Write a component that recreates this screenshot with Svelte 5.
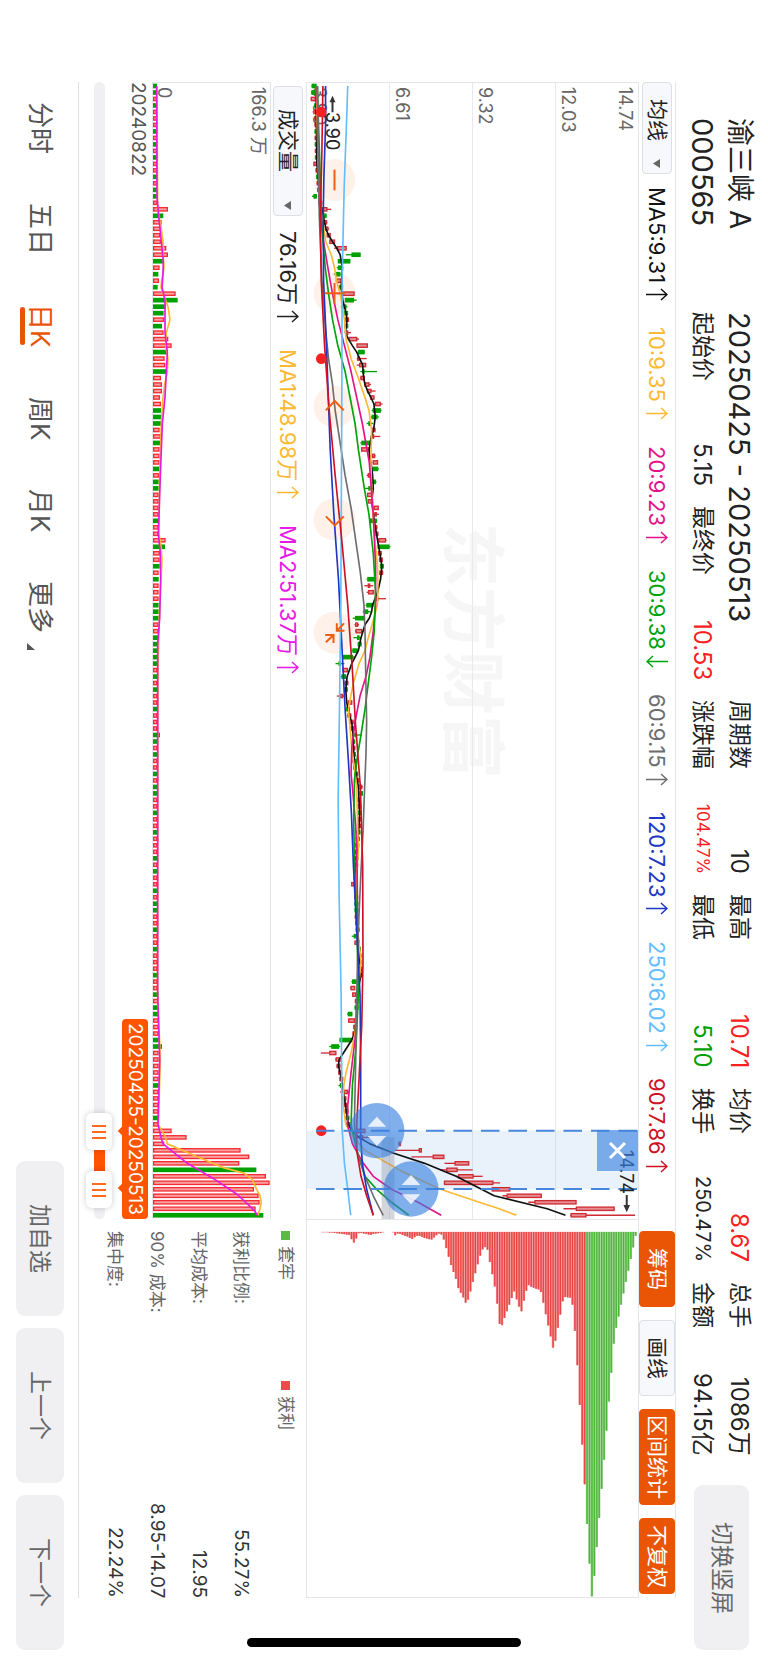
<script>
    // trading days run along the inline axis, one slot per bar
    const SLOT = 19.47;
    const FIRST = 9;
    const LENGTH = 3408;
    const at = (i) => FIRST + i * SLOT;

    const days =
        "GGRGRRRGRGRGRRGRGGR" +
        "RGRRRRRRGRGRGRGGGRGRRRGRRGRRRR" +
        "RGGGRRGRRRGRGGRRRRGRRRGRRGRGRRRGGGRRGGGGGRGRGRRGRRRGG" +
        "RGRRGRGGRRGRRGRRRGRGRRGRGGRRGRRGRRRGRRG" +
        "RGGRRRGGRRRRRGRRRRGR" +
        "RRRRRRGRRRRRRG";

    const busy = {
        19: 45, 20: 31, 21: 26, 22: 26, 23: 22, 24: 24, 25: 40, 26: 45, 27: 30,
        28: 20, 29: 16, 30: 18, 31: 14, 32: 68, 33: 74, 34: 38, 35: 32, 36: 33,
        37: 27, 38: 32, 39: 46, 40: 56, 41: 42, 42: 35, 43: 37, 44: 40, 45: 24,
        46: 27, 47: 27, 48: 21, 49: 24, 50: 24, 51: 24, 52: 24, 53: 20, 54: 24,
        55: 22, 56: 20, 57: 20, 58: 20, 59: 20, 60: 18, 70: 38, 71: 36, 72: 21,
        73: 20, 74: 20, 100: 21, 148: 27, 161: 56, 162: 101, 163: 34, 164: 263,
        165: 289, 166: 259, 167: 310, 168: 339, 169: 350, 170: 303, 171: 317,
        172: 320, 173: 308, 174: 331
    };
    const volumes = [...days].map((d, i) => ({
        up: d === "R",
        y: at(i),
        size: busy[i] ?? (i < 19 ? 12 : i < 86 ? 17 : i < 140 ? 13 : 17)
    }));

    // [bar, value] pairs
    const averages = [
        { name: "MA5", value: "9.31", arrow: "↑", color: "#111111", line: [[0,42],[12,45],[18,55],[20,64],[22,72],[23,80],[24,92],[25,105],[26,115],[28,122],[31,118],[33,123],[35,133],[36,136],[38,131],[39,140],[40,152],[41,165],[43,183],[45,186],[46,190],[47,198],[48,208],[49,217],[51,221],[53,216],[54,209],[56,203],[57,203],[58,208],[60,213],[62,215],[64,210],[67,218],[70,228],[72,235],[74,241],[76,237],[78,228],[79,220],[80,213],[81,210],[82,203],[83,190],[85,178],[87,170],[89,150],[91,136],[93,132],[95,135],[97,143],[98,150],[100,154],[102,155],[105,160],[108,170],[112,174],[114,172],[118,165],[122,162],[128,165],[133,172],[137,178],[140,166],[144,163],[146,158],[147,150],[149,125],[150,112],[151,110],[152,115],[154,122],[158,134],[160,140],[161,150],[162,172],[163,205],[164.4,275],[166,370],[168,465],[171,580],[173,740],[174,795]] },
        { name: "10", value: "9.35", arrow: "↑", color: "#fdb933", line: [[0,43],[18,52],[20,60],[24,72],[26,88],[28,98],[30,104],[32,115],[34,122],[36,128],[39,133],[42,148],[45,170],[48,190],[50,202],[53,210],[58,208],[62,210],[66,214],[70,220],[74,228],[78,229],[80,227],[82,217],[85,200],[87,190],[89,172],[92,155],[94,147],[96,140],[99,145],[102,150],[105,158],[108,165],[118,170],[122,163],[130,168],[135,178],[140,168],[146,160],[149,148],[152,133],[154,126],[157,124],[160,132],[162,155],[164,190],[167.2,300],[170,418],[171.7,517],[173,595],[174,647]] },
        { name: "20", value: "9.23", arrow: "↑", color: "#e3128b", line: [[0,45],[18,52],[24,65],[28,78],[32,92],[36,108],[40,128],[44,148],[48,165],[52,182],[58,203],[66,215],[74,222],[80,222],[84,215],[88,205],[91,193],[94,175],[98,160],[102,150],[106,148],[108,152],[114,162],[120,166],[130,168],[138,170],[146,162],[152,148],[157,138],[160,137],[163,152],[166,185],[168,215],[170,270],[172,350],[174,420]] },
        { name: "30", value: "9.38", arrow: "↓", color: "#00a30a", line: [[0,46],[22,60],[28,70],[32,80],[36,92],[40,108],[44,130],[48,145],[52,160],[56,170],[62,188],[66,202],[72,215],[78,222],[84,218],[88,210],[92,200],[96,190],[100,178],[103,168],[107,158],[114,156],[122,160],[130,166],[140,170],[148,163],[154,152],[160,148],[164,165],[168,190],[170,225],[172,270],[174,322]] },
        { name: "60", value: "9.15", arrow: "↑", color: "#6e6e6e", line: [[0,47],[20,52],[30,60],[38,72],[42,80],[46,92],[50,100],[55,115],[60,130],[65,148],[70,162],[75,176],[80,187],[84,190],[90,192],[98,195],[103,193],[108,189],[115,184],[122,177],[130,170],[140,165],[150,162],[160,158],[164,165],[168,190],[171,215],[174,245]] },
        { name: "120", value: "7.23", arrow: "↑", color: "#2036c4", line: [[0,71],[6,71],[14,66],[20,64],[30,65],[38,72],[46,78],[56,85],[66,96],[76,110],[86,120],[96,130],[104,140],[112,149],[120,155],[130,165],[140,175],[150,177],[162,177],[166,182],[170,195],[174,215]] },
        { name: "250", value: "6.02", arrow: "↑", color: "#63bdff", line: [[0,138],[6,134],[16,127],[30,121],[50,120],[80,117],[96,113],[110,109],[125,112],[140,118],[155,120],[160,120],[166,128],[170,138],[174,147]] },
        { name: "90", value: "7.86", arrow: "↑", color: "#cd1224", line: [[0,63],[10,60],[20,55],[30,58],[40,68],[50,82],[60,100],[70,120],[80,138],[90,152],[98,161],[108,176],[120,183],[135,184],[145,180],[155,170],[160,165],[164,165],[168,178],[171,195],[174,215]] }
    ];

    const volumeAverages = [
        { color: "#fdb933", line: [[0,12],[19,14],[20,18],[22,25],[24,30],[26,30],[28,33],[30,26],[31,24],[32,30],[34,45],[36,51],[38,40],[40,38],[42,45],[44,43],[46,35],[48,30],[52,25],[60,20],[69,18],[71,24],[73,27],[76,24],[80,20],[90,15],[140,14],[150,22],[160,16],[162,38],[163,43],[165,133],[166.7,213],[167.5,273],[168.5,298],[170,311],[171,321],[172,325],[173,321],[174,315]] },
        { color: "#e619e6", line: [[0,11],[17,12],[20,17],[24,25],[27,31],[29,30],[31,27],[33,36],[38,36],[41,43],[44,40],[48,36],[52,28],[60,22],[69,16],[72,22],[76,23],[82,20],[86,14],[140,14],[150,20],[160,15],[162,24],[163,30],[166,103],[168.4,183],[170.8,253],[173.2,303],[174,313]] }
    ];

    // low, body start, body end, high
    const swings = {
        0: [28,31,42,44], 1: [27,30,40,42], 2: [26,28,40,40], 4: [32,36,42,44], 12: [34,36,43,43], 17: [30,36,43,43],
        19: [57,60,75,88], 20: [62,64,72,75], 21: [66,68,74,76], 22: [70,72,78,82], 23: [75,76,85,85], 24: [82,84,98,98],
        25: [97,107,133,133], 26: [132,151,175,176], 27: [108,110,144,145], 28: [105,110,118,122], 29: [96,102,114,117],
        30: [102,104,118,118], 32: [105,120,157,157], 33: [130,131,155,165], 34: [117,124,132,137], 38: [130,132,138,148],
        39: [141,143,165,172], 40: [165,166,197,197], 41: [168,171,187,190], 42: [165,168,172,195], 43: [165,174,192,193],
        44: [176,184,187,226], 45: [175,178,188,188], 46: [188,190,202,208], 47: [195,198,208,222], 48: [205,207,217,218],
        49: [215,222,236,243], 50: [210,215,236,240], 51: [208,212,226,232], 52: [195,202,206,215], 54: [210,213,216,236],
        55: [176,181,205,206], 56: [178,180,200,200], 57: [205,213,219,222], 58: [213,215,228,228], 59: [205,214,228,232],
        60: [195,200,206,212], 61: [210,213,221,225], 62: [188,202,205,215], 63: [197,198,210,210], 64: [199,200,213,213],
        65: [213,218,230,230], 66: [213,220,224,232], 67: [203,206,224,227], 70: [228,232,252,255], 71: [228,230,262,267],
        76: [195,199,222,222], 77: [188,200,204,215], 78: [195,201,215,218], 79: [222,225,229,253], 80: [192,196,213,216],
        81: [183,188,198,208], 82: [153,162,187,187], 83: [158,162,168,172], 84: [160,163,180,182], 85: [155,168,172,180],
        87: [150,154,166,172], 88: [123,125,152,160], 89: [101,112,116,128], 90: [122,124,137,138], 91: [117,121,131,133],
        94: [105,117,122,130], 95: [138,140,150,151], 100: [150,160,163,180], 108: [167,170,180,184], 109: [174,175,182,183],
        123: [148,150,156,157], 131: [150,158,161,165], 132: [158,160,173,173], 138: [149,153,163,164], 139: [145,148,159,160],
        140: [151,153,162,162], 143: [136,140,150,152], 144: [139,141,158,160], 147: [113,115,150,150], 148: [82,90,110,115],
        149: [57,84,102,103], 150: [100,103,115,116], 154: [110,116,119,122], 155: [115,128,137,142], 161: [150,168,190,190],
        162: [160,175,183,205], 163: [290,293,297,299], 164: [280,354,360,360], 165: [330,396,428,428], 166: [430,462,503,503],
        167: [418,437,468,515], 168: [465,473,516,545], 169: [428,430,576,598], 170: [572,574,627,640], 171: [605,619,722,722],
        172: [683,703,827,827], 173: [789,828,942,942], 174: [810,812,857,1005]
    };

    // days whose candle and volume bar disagree in colour
    const closedLower = [26, 28, 109, 131, 138, 142, 143, 147, 148, 154];
    const closedHigher = [108, 123, 132, 139, 140, 144, 149, 150, 155, 167, 174];

    function valueAt(line, i) {
        const n = line.findIndex((p) => p[0] >= i);
        if (n < 1) return line[0][1];
        const [a, b] = [line[n - 1], line[n]];
        return a[1] + ((b[1] - a[1]) * (i - a[0])) / (b[0] - a[0]);
    }

    const candles = [...days].map((d, i) => {
        const mid = valueAt(averages[0].line, i);
        const [low, from, to, high] = swings[i] ?? [mid - 6, mid - 4, mid + 4, mid + 6];
        const up = closedHigher.includes(i) || (d === "R" && !closedLower.includes(i));
        return { up, y: at(i), low, from, to, high };
    });

    const points = (line) => line.map(([i, v]) => `${v},${at(i)}`).join(" ");

    // chip distribution, highest price first
    const STEP = 7.33;
    const chips = [
        12, 47, 82, 117, 151, 186, 220, 256, 290, 338, 426, 513, 601, 689, 777, 865, 953, 1040, 1102, 1003, 883,
        763, 643, 523, 403, 299, 220, 199, 198, 197, 210, 250, 290, 329, 350, 316, 283, 249, 214, 182, 174, 172,
        169, 166, 161, 178, 208, 240, 226, 204, 180, 200, 220, 240, 260, 282, 278, 217, 165, 128, 91, 54, 46, 53,
        72, 98, 125, 151, 180, 205, 214, 198, 184, 170, 142, 121, 100, 75, 49, 23, 8, 5, 10, 17, 23, 22, 20, 18,
        15, 12, 12, 16, 21, 18, 14, 12, 9, 6, 5, 10, 1, 0, 0, 0, 1, 3, 4, 5, 6, 9, 8, 6, 5, 3, 4, 20, 32, 22, 9,
        8, 7, 6, 5, 4, 3, 2, 2, 1, 1, 1
    ];

    const stats = [
        { label: "周期数", value: "10" },
        { label: "最高", value: "10.71", tone: "up" },
        { label: "均价", value: "8.67", tone: "up" },
        { label: "总手", value: "1086万" },
        { label: "起始价", value: "5.15" },
        { label: "最终价", value: "10.53", tone: "up" },
        { label: "涨跌幅", value: "104.47%", tone: "up", size: "small" },
        { label: "最低", value: "5.10", tone: "down" },
        { label: "换手", value: "250.47%", size: "medium" },
        { label: "金额", value: "94.15亿" }
    ];

    const costs = [
        ["获利比例:", "55.27%"],
        ["平均成本:", "12.95"],
        ["90% 成本:", "8.95-14.07"],
        ["集中度:", "22.24%"]
    ];

    const tabs = ["分时", "五日", "日K", "周K", "月K"];
    let active = $state("日K");

    let rangeStart = $state(937);
    let rangeEnd = $state(990);
</script>

<div class="screen">
    <header class="header">
        <div class="stock">
            <div class="name">渝三峡 A</div>
            <div class="code">000565</div>
        </div>
        <div class="stats">
            <div class="period">20250425 - 20250513</div>
            {#each stats as s}
                <div class="stat">
                    <span>{s.label}</span>
                    <span class="num {s.tone ?? ''} {s.size ?? ''}">{s.value}</span>
                </div>
            {/each}
        </div>
        <button class="soft rotate">切换竖屏</button>
    </header>

    <main class="main">
        <div class="toolbar">
            <label class="picker">
                <select aria-label="均线">
                    <option>均线</option>
                </select>
                <svg class="caret" viewBox="0 0 7 9"><path d="M7 0V9L0 4.5Z" /></svg>
            </label>
            <div class="legend">
                {#each averages as ma}
                    <span class="ma" style="color: {ma.color}">
                        {ma.name}:{ma.value}
                        {@render trend(ma.arrow)}
                    </span>
                {/each}
            </div>
            <div class="actions">
                <button class="chip on">筹码</button>
                <button class="chip">画线</button>
                <button class="chip on">区间统计</button>
                <button class="chip on">不复权</button>
            </div>
        </div>

        <div class="board">
            <section class="price">
                <div class="watermark">东方财富</div>
                <div class="scale">
                    <div class="band"><span>14.74</span><span>12.03</span></div>
                    <div class="band"><span>9.32</span></div>
                    <div class="band"><span>6.61</span></div>
                    <div class="band"><span>3.90</span></div>
                </div>
                <svg class="plot" viewBox="15 0 999 {LENGTH}" preserveAspectRatio="none">
                    <g class="marks">
                        <circle cx="98" cy="291" r="63" />
                        <circle cx="98" cy="631" r="63" />
                        <circle cx="98" cy="971" r="63" />
                        <circle cx="98" cy="1309" r="63" />
                        <circle cx="98" cy="1649" r="63" />
                    </g>
                    <rect class="selection" x="15" y="3143" width="999" height="175" />
                    <g>
                        {#each candles as c}
                            <g class="candle" class:rise={c.up}>
                                <path d="M{c.low} {c.y}H{c.high}" />
                                <rect x={c.from} y={c.y - 5} width={c.to - c.from} height="10" />
                            </g>
                        {/each}
                    </g>
                    {#each averages as ma}
                        <polyline class="line" points={points(ma.line)} stroke={ma.color} />
                    {/each}
                    <g class="glyphs">
                        <path d="M98 260V322" />
                        <path d="M98 600V662M68 631H130" />
                        <path d="M72 982L99 954L126 982" />
                        <path d="M72 1300L99 1327L126 1300" />
                        <path d="M127 1621L105 1643M105 1621V1643H128" />
                        <path d="M72 1678L95 1656M70 1656H95V1680" />
                    </g>
                    <g class="dots">
                        <circle cx="58" cy="87" r="16" />
                        <circle cx="58" cy="827" r="16" />
                        <circle cx="58" cy="3143" r="16" />
                    </g>
                    <g class="pointers">
                        <path class="shaft" d="M92 88V50M980 3336V3370" />
                        <path d="M92 38L101 58H83ZM980 3388L970 3366H990Z" />
                    </g>
                    <rect class="shade" x="240" y="3163" width="39" height="245" />
                    <path class="edge" d="M42 3143H1014M42 3318H1014" />
                    <g class="knobs">
                        <circle cx="226" cy="3143" r="83" />
                        <circle cx="329" cy="3318" r="83" />
                        <path d="M198 3131L226 3101L254 3131ZM198 3159L226 3189L254 3159Z" />
                        <path d="M301 3306L329 3276L357 3306ZM301 3334L329 3364L357 3334Z" />
                    </g>
                </svg>
                <span class="note low">3.90</span>
                <span class="note high">14.74</span>
                <button class="close" aria-label="关闭">
                    <svg viewBox="0 0 41 41"><path d="M13 13L28 28M28 13L13 28" /></svg>
                </button>
            </section>

            <section class="distribution">
                <svg class="plot" viewBox="15 0 999 1140" preserveAspectRatio="none">
                    {#each chips as size, k}
                        <g class={k < 21 ? "trapped" : "profit"}>
                            <rect class="wash" x={1003 - k * STEP} y="36" width={STEP} height={size} />
                            <rect x={1005 - k * STEP} y="36" width="4" height={size} />
                        </g>
                    {/each}
                </svg>
            </section>

            <section class="volume">
                <div class="volume-bar">
                    <label class="picker wide">
                        <select aria-label="成交量">
                            <option>成交量</option>
                        </select>
                        <svg class="caret" viewBox="0 0 7 9"><path d="M7 0V9L0 4.5Z" /></svg>
                    </label>
                    <div class="legend">
                        <span class="ma">76.16万 {@render trend("↑")}</span>
                        <span class="ma gold">MA1:48.98万 {@render trend("↑")}</span>
                        <span class="ma violet">MA2:51.37万 {@render trend("↑")}</span>
                    </div>
                </div>
                <div class="bars">
                    <div class="limits"><span>166.3 万</span><span>0</span></div>
                    <svg class="plot" viewBox="0 0 351 {LENGTH}" preserveAspectRatio="none">
                        {#each volumes as v}
                            {#if v.up}
                                <rect class="gain" x="2" y={v.y - 5} width={v.size - 4} height="10" />
                            {:else}
                                <rect class="loss" x="0" y={v.y - 7} width={v.size} height="14" />
                            {/if}
                        {/each}
                        {#each volumeAverages as ma}
                            <polyline class="line" points={points(ma.line)} stroke={ma.color} />
                        {/each}
                    </svg>
                </div>
                <div class="dates">
                    <span>20240822</span>
                    <span class="tag">
                        20250425-20250513
                        <i class="notch"></i>
                        <i class="notch last"></i>
                    </span>
                </div>
                <div class="slider">
                    <div class="track">
                        <div
                            class="fill"
                            style="margin-inline-start: {rangeStart / 10}%; inline-size: {(rangeEnd - rangeStart) / 10}%"
                        ></div>
                    </div>
                    <input type="range" min="0" max="1000" aria-label="开始" bind:value={rangeStart} />
                    <input type="range" min="0" max="1000" aria-label="结束" bind:value={rangeEnd} />
                </div>
            </section>

            <section class="cost">
                <div class="keys">
                    <span class="key"><i class="swatch trapped"></i>套牢</span>
                    <span class="key"><i class="swatch profit"></i>获利</span>
                </div>
                <dl>
                    {#each costs as [label, value]}
                        <div class="row">
                            <dt>{label}</dt>
                            <dd>{value}</dd>
                        </div>
                    {/each}
                </dl>
            </section>
        </div>
    </main>

    <footer class="footer">
        <nav class="tabs">
            {#each tabs as tab}
                <button class="tab" class:active={active === tab} onclick={() => (active = tab)}>{tab}</button>
            {/each}
            <button class="tab">
                更多
                <svg class="corner" viewBox="0 0 8 7"><path d="M0 0V7H8Z" /></svg>
            </button>
        </nav>
        <div class="steps">
            <button class="soft">加自选</button>
            <button class="soft">上一个</button>
            <button class="soft">下一个</button>
        </div>
    </footer>

    <div class="home"></div>
</div>

{#snippet trend(arrow)}
    <svg class="trend" viewBox="0 0 22 13" role="img" aria-label={arrow}>
        <path d={arrow === "↑" ? "M0 6.5H21M15 1L21 6.5L15 12" : "M22 6.5H1M7 1L1 6.5L7 12"} />
    </svg>
{/snippet}

<style>
    :global(body) {
        margin: 0;
        background: #fff;
    }

    /* the phone is held sideways, so the inline axis runs down the window */
    .screen {
        position: relative;
        box-sizing: border-box;
        display: flex;
        flex-direction: column;
        width: 100%;
        height: 100vh;
        overflow: hidden;
        writing-mode: vertical-rl;
        text-orientation: sideways;
        font-family: Inter, "Noto Sans CJK SC", sans-serif;
        font-size: 24px;
        line-height: 1;
        color: #222;
        white-space: nowrap;
    }

    button,
    select,
    input {
        margin: 0;
        border: 0;
        padding: 0;
        font: inherit;
        color: inherit;
        background: none;
        appearance: none;
        writing-mode: vertical-rl;
        text-orientation: sideways;
    }

    .header {
        display: flex;
        align-items: center;
        padding-block: 10px 8px;
        padding-inline: 118px 13px;
    }

    .stock {
        flex: 0 0 194px;
        font-size: 28px;
        line-height: 37px;
    }

    .code {
        font-size: 29px;
    }

    .stats {
        flex: 1;
        display: grid;
        grid-template-columns: repeat(6, 1fr);
        column-gap: 20px;
        line-height: 37px;
    }

    .period {
        grid-column: span 2;
        font-size: 29px;
    }

    .stat {
        display: flex;
        justify-content: space-between;
        font-size: 23px;
    }

    .num {
        font-size: 24px;
    }

    .num.small {
        font-size: 17px;
    }

    .num.medium {
        font-size: 20px;
    }

    .up {
        color: #fa2020;
    }

    .down {
        color: #00a000;
    }

    .soft {
        inline-size: 155px;
        block-size: 48px;
        border-radius: 9px;
        background: #f0f0f3;
        font-size: 23px;
        color: #666;
        text-align: center;
    }

    .rotate {
        inline-size: 165px;
        block-size: 55px;
        margin-inline-start: 29px;
    }

    .main {
        flex: 1;
        min-block-size: 0;
        display: flex;
        flex-direction: column;
        margin-inline: 82px 65px;
    }

    .toolbar {
        display: flex;
        align-items: center;
        block-size: 36px;
        border-block: 1px solid #e4e5ea;
    }

    .picker {
        position: relative;
        display: block;
    }

    .picker select {
        display: block;
        box-sizing: border-box;
        inline-size: 92px;
        block-size: 30px;
        padding-inline-start: 16px;
        border: 1px solid #dcdfe6;
        border-radius: 4px;
        background: #f7f8fb;
        font-size: 21px;
        line-height: 28px;
    }

    .picker.wide select {
        inline-size: 130px;
        padding-inline-start: 22px;
    }

    .caret {
        position: absolute;
        inset-inline-end: 6px;
        inset-block-start: 12px;
        width: 7px;
        height: 9px;
        fill: #666;
    }

    .legend {
        display: flex;
        gap: 26px;
        margin-inline-start: 13px;
        font-size: 22px;
    }

    .ma {
        display: flex;
        align-items: center;
        gap: 5px;
    }

    .gold {
        color: #fdb933;
    }

    .violet {
        color: #e619e6;
    }

    .trend {
        width: 22px;
        height: 13px;
        fill: none;
        stroke: currentColor;
        stroke-width: 1.5;
    }

    .actions {
        display: flex;
        gap: 13px;
        margin-inline: auto 4px;
    }

    .chip {
        box-sizing: border-box;
        min-inline-size: 76px;
        block-size: 36px;
        padding-inline: 5px;
        border: 1px solid #dcdfe6;
        border-radius: 4px;
        background: #f7f8fb;
        font-size: 21px;
        text-align: center;
    }

    .chip.on {
        border-color: #e95504;
        background: #e95504;
        color: #fff;
    }

    .board {
        flex: 1;
        min-block-size: 0;
        display: grid;
        grid-template-columns: 3fr 1fr;
        grid-template-rows: 1fr auto;
    }

    .price {
        position: relative;
        border-inline-start: 1px solid #e4e5ea;
    }

    .plot {
        position: absolute;
        inset: 0;
        width: 100%;
        height: 100%;
    }

    .watermark {
        position: absolute;
        inset: 0;
        display: grid;
        place-content: center;
        font-size: 64px;
        font-weight: 700;
        color: #f6f6f6;
    }

    .scale {
        position: absolute;
        inset: 0;
        display: flex;
        flex-direction: column;
        font-size: 18px;
        color: #666;
    }

    .band {
        flex: 1;
        display: flex;
        flex-direction: column;
        justify-content: flex-end;
        padding-block: 4px 3px;
        padding-inline-start: 4px;
        border-block-end: 1px solid #e8e9ef;
    }

    .band:first-child {
        justify-content: space-between;
    }

    .band:last-child {
        border-block-end: 0;
    }

    .marks circle {
        fill: #fef1ea;
    }

    .glyphs {
        fill: none;
        stroke: #ee5f12;
        stroke-width: 6;
    }

    .candle {
        fill: #00a000;
        stroke: #00a000;
        stroke-width: 4;
    }

    .candle.rise {
        fill: #e58d90;
        stroke: #cf2b33;
    }

    .line {
        fill: none;
        stroke-width: 5;
        stroke-linejoin: round;
    }

    .dots circle {
        fill: #f92020;
    }

    .pointers {
        fill: #333;
    }

    .shaft {
        fill: none;
        stroke: #333;
        stroke-width: 6;
    }

    .selection {
        fill: #4a90e2;
        fill-opacity: 0.12;
    }

    .shade {
        fill: #70788a;
        fill-opacity: 0.3;
    }

    .edge {
        fill: none;
        stroke: #4787dc;
        stroke-width: 6;
        stroke-dasharray: 56 27;
    }

    .knobs circle {
        fill: #3a82e0;
        fill-opacity: 0.64;
    }

    .knobs path {
        fill: #fff;
        fill-opacity: 0.8;
    }

    .note {
        position: absolute;
        font-size: 18px;
        color: #222;
    }

    .low {
        inset-block-end: 16px;
        inset-inline-start: 29px;
    }

    .high {
        inset-block-start: 3px;
        inset-inline-end: 25px;
    }

    .close {
        position: absolute;
        inset-block-start: 0;
        inset-inline-end: 48px;
        width: 41px;
        height: 41px;
        background: rgba(58, 130, 224, 0.64);
    }

    .close svg {
        display: block;
        width: 41px;
        height: 41px;
        fill: none;
        stroke: #fff;
        stroke-width: 3;
    }

    .distribution {
        position: relative;
        border-inline: 1px solid #e4e5ea;
    }

    .trapped {
        fill: #4fb53a;
        background: #5bba46;
    }

    .profit {
        fill: #e94545;
        background: #ea4b4b;
    }

    .wash {
        fill-opacity: 0.6;
    }

    .volume {
        display: flex;
        flex-direction: column;
        border-block-start: 1px solid #e4e5ea;
    }

    .volume-bar {
        box-sizing: border-box;
        display: flex;
        align-items: center;
        block-size: 36px;
        padding-block-start: 2px;
        padding-inline-start: 4px;
        border-block-end: 1px solid #e4e5ea;
    }

    .volume-bar .legend {
        margin-inline-start: 15px;
    }

    .bars {
        position: relative;
        block-size: 117px;
        border-inline-start: 1px solid #e4e5ea;
        border-block-end: 1px solid #e4e5ea;
    }

    .limits {
        position: absolute;
        inset: 0;
        display: flex;
        flex-direction: column;
        justify-content: space-between;
        padding-block: 3px 2px;
        padding-inline-start: 4px;
        font-size: 18px;
        color: #666;
    }

    .gain {
        fill: #f9a0a0;
        stroke: #f52c34;
        stroke-width: 4;
    }

    .loss {
        fill: #00a000;
    }

    .dates {
        display: flex;
        justify-content: space-between;
        align-items: flex-start;
        padding-block: 4px 3px;
        font-size: 19px;
        color: #555;
    }

    .tag {
        position: relative;
        padding-inline: 4px;
        border-radius: 4px;
        background: #ff5400;
        line-height: 26px;
        color: #fff;
    }

    .notch {
        position: absolute;
        inset-block-end: -3px;
        inset-inline-end: 85px;
        width: 6px;
        height: 6px;
        background: #ff5400;
        rotate: 45deg;
    }

    .notch.last {
        inset-inline-end: 28px;
    }

    .slider {
        position: relative;
        block-size: 40px;
        display: flex;
        flex-direction: column;
        justify-content: center;
    }

    .track {
        block-size: 11px;
        border-radius: 6px;
        background: #f0f0f3;
    }

    .fill {
        block-size: 100%;
        background: #ff5400;
    }

    .slider input {
        position: absolute;
        inset: 0;
        width: 100%;
        height: 100%;
        pointer-events: none;
    }

    .slider input::-webkit-slider-thumb {
        appearance: none;
        width: 26px;
        height: 37px;
        border-radius: 6px;
        background:
            linear-gradient(#ff6a20, #ff6a20) center 12px / 14px 2px no-repeat,
            linear-gradient(#ff6a20, #ff6a20) center 18px / 14px 2px no-repeat,
            linear-gradient(#ff6a20, #ff6a20) center 24px / 14px 2px no-repeat,
            #fff;
        box-shadow: 0 0 6px rgba(0, 0, 0, 0.2);
        pointer-events: auto;
    }

    .cost {
        border-block-start: 1px solid #e4e5ea;
        padding-inline-start: 12px;
        font-size: 17px;
        color: #666;
    }

    .keys {
        display: grid;
        grid-template-columns: 2fr 3fr;
        column-gap: 6px;
        line-height: 41px;
    }

    .key {
        display: flex;
        align-items: center;
        gap: 6px;
    }

    .swatch {
        width: 9px;
        height: 9px;
    }

    dl {
        margin: 0;
        padding-block-start: 3px;
    }

    .row {
        display: flex;
        justify-content: space-between;
        line-height: 42px;
    }

    dd {
        margin: 0;
        font-size: 19px;
        color: #333;
    }

    .footer {
        display: flex;
        align-items: center;
        justify-content: space-between;
        block-size: 79px;
        padding-inline: 102px 13px;
        position: relative;
    }

    .footer::before {
        content: "";
        position: absolute;
        inset-block-start: 0;
        inset-inline: 82px 65px;
        border-block-start: 1px solid #dedfe3;
    }

    .tabs {
        display: flex;
        gap: 49px;
    }

    .tab {
        position: relative;
        font-size: 26px;
        line-height: 30px;
        color: #555;
    }

    .tab.active {
        color: #ea5504;
    }

    .tab.active::after {
        content: "";
        position: absolute;
        inset-block-end: -5px;
        inset-inline: 3px;
        block-size: 5px;
        border-radius: 3px;
        background: #ea5504;
    }

    .corner {
        position: absolute;
        inset-block-end: 2px;
        inset-inline-end: -16px;
        width: 8px;
        height: 7px;
        fill: #555;
    }

    .steps {
        display: flex;
        gap: 12px;
    }

    /* system home indicator */
    .home {
        position: absolute;
        bottom: 16px;
        left: 50%;
        width: 274px;
        height: 9px;
        margin-left: -137px;
        border-radius: 5px;
        background: #000;
    }
</style>
